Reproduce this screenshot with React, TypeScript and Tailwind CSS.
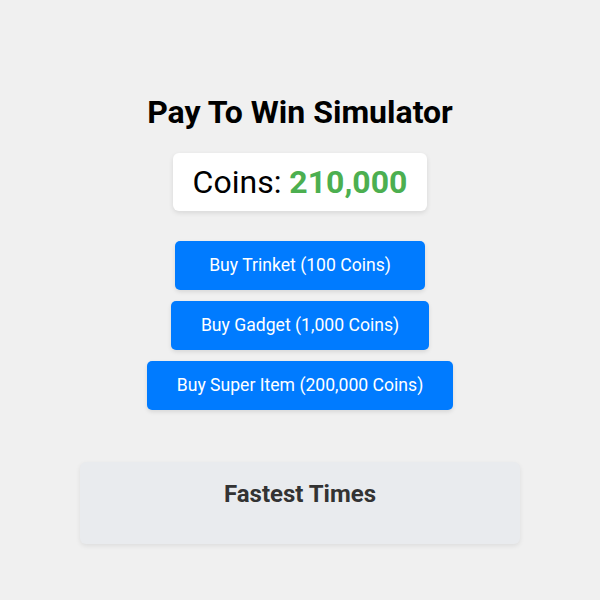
export default function App() {
  const items = [
    { label: "Buy Trinket (100 Coins)" },
    { label: "Buy Gadget (1,000 Coins)" },
    { label: "Buy Super Item (200,000 Coins)" },
  ];
  return (
    <div
      className="min-h-[600px] w-full bg-[#f0f0f0] flex flex-col items-center pt-[93px]"
      style={{ fontFamily: "Roboto, 'Noto Sans', sans-serif" }}
    >
      <h1 className="text-[32px] leading-[38px] font-bold text-black">Pay To Win Simulator</h1>
      <div className="mt-[22px] h-[58px] px-[20px] flex items-center bg-white rounded-[6px] shadow-[0_2px_5px_rgba(0,0,0,0.1)] text-[32px] text-black">
        <span>Coins:&nbsp;</span>
        <span className="font-bold text-[#4caf50]">210,000</span>
      </div>
      <div className="mt-[30px] flex flex-col items-center gap-[11px]">
        {items.map((it) => (
          <button
            key={it.label}
            className="h-[49px] min-w-[250px] px-[30px] bg-[#007bff] text-white text-[17.6px] rounded-[5px] shadow-[0_2px_4px_rgba(0,0,0,0.1)]"
          >
            {it.label}
          </button>
        ))}
      </div>
      <div className="mt-[52px] w-[440px] h-[82px] bg-[#e9ebee] rounded-[6px] shadow-[0_2px_5px_rgba(0,0,0,0.08)] flex justify-center pt-[18px]">
        <h2 className="text-[24px] leading-[28px] font-bold text-[#333]">Fastest Times</h2>
      </div>
    </div>
  );
}
